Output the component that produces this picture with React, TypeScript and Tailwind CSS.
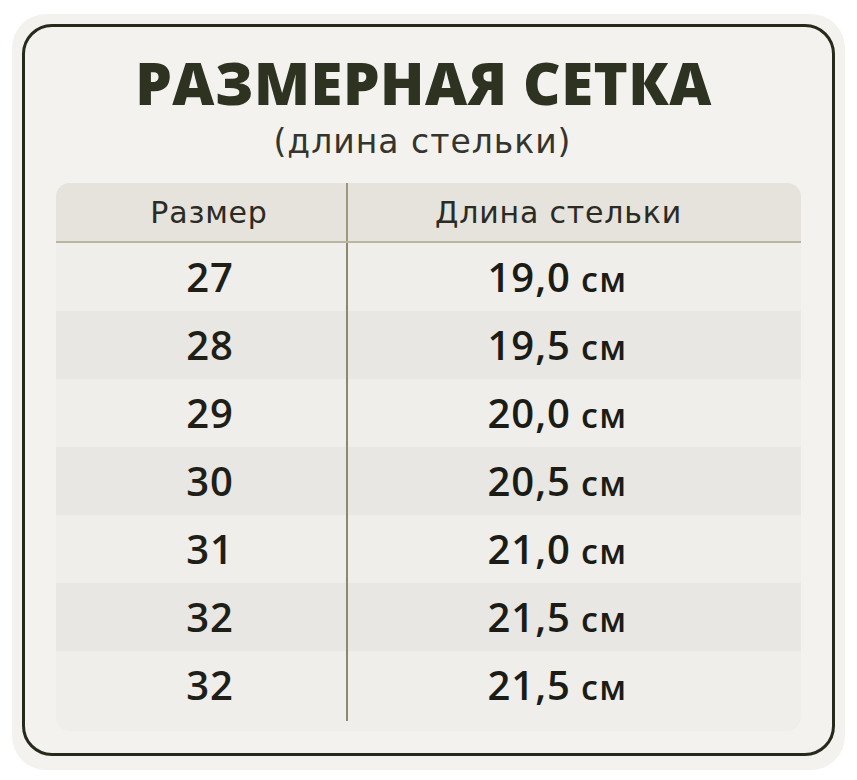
import React from "react";

const rows = [
  { size: "27", len: "19,0" },
  { size: "28", len: "19,5" },
  { size: "29", len: "20,0" },
  { size: "30", len: "20,5" },
  { size: "31", len: "21,0" },
  { size: "32", len: "21,5" },
  { size: "32", len: "21,5" },
];

export default function App() {
  return (
    <div className="w-[857px] h-[780px] bg-white pt-[14px] px-[12px] font-['Open_Sans',sans-serif]">
      <div className="h-[756px] rounded-[34px] bg-[#f3f2ef] p-[10px]">
        <div className="h-[732px] rounded-[30px] border-[3px] border-[#262a1a] px-[31px] pt-[24px]">
          <h1 className="text-center text-[58px] leading-[64px] font-extrabold tracking-[0.5px] text-[#2d3320] pr-[10px]">
            РАЗМЕРНАЯ СЕТКА
          </h1>
          <p className="text-center text-[33px] leading-[40px] tracking-[1px] text-[#34352e] mt-[7px] pr-[12px] font-['DejaVu_Sans',sans-serif]">
            (длина стельки)
          </p>
          <div className="mt-[21px] rounded-[14px] bg-[#efeeeb] overflow-hidden h-[548px]">
            <div className="flex h-[60px] bg-[#e5e3dc] border-b-[2px] border-[#b9b59f] font-['DejaVu_Sans',sans-serif]">
              <div className="w-[290px] flex items-center justify-center text-[30px] tracking-[0.8px] text-[#2b2b24] pl-[16px]">Размер</div>
              <div className="w-[2px] bg-[#9d987c]" />
              <div className="flex-1 flex items-center justify-center text-[30px] tracking-[0.8px] text-[#2b2b24] pr-[32px]">Длина стельки</div>
            </div>
            <div className="flex">
              <div className="w-[290px]">
                {rows.map((r, i) => (
                  <div
                    key={i}
                    className={`h-[68px] flex items-center justify-center text-[40px] font-semibold tracking-[1px] text-[#1f1f18] pl-[18px] ${i % 2 === 1 ? "bg-[#e8e7e3]" : ""}`}
                  >
                    {r.size}
                  </div>
                ))}
              </div>
              <div className="w-[2px] h-[478px] bg-[#8c8770]" />
              <div className="flex-1">
                {rows.map((r, i) => (
                  <div
                    key={i}
                    className={`h-[68px] flex items-center justify-center text-[#1c1c16] pr-[34px] ${i % 2 === 1 ? "bg-[#e8e7e3]" : ""}`}
                  >
                    <span className="text-[40px] font-semibold tracking-[1px]">{r.len}</span>
                    <span className="text-[34px] font-semibold tracking-[1.5px] ml-[10px] mt-[5px]">см</span>
                  </div>
                ))}
              </div>
            </div>
          </div>
        </div>
      </div>
    </div>
  );
}
